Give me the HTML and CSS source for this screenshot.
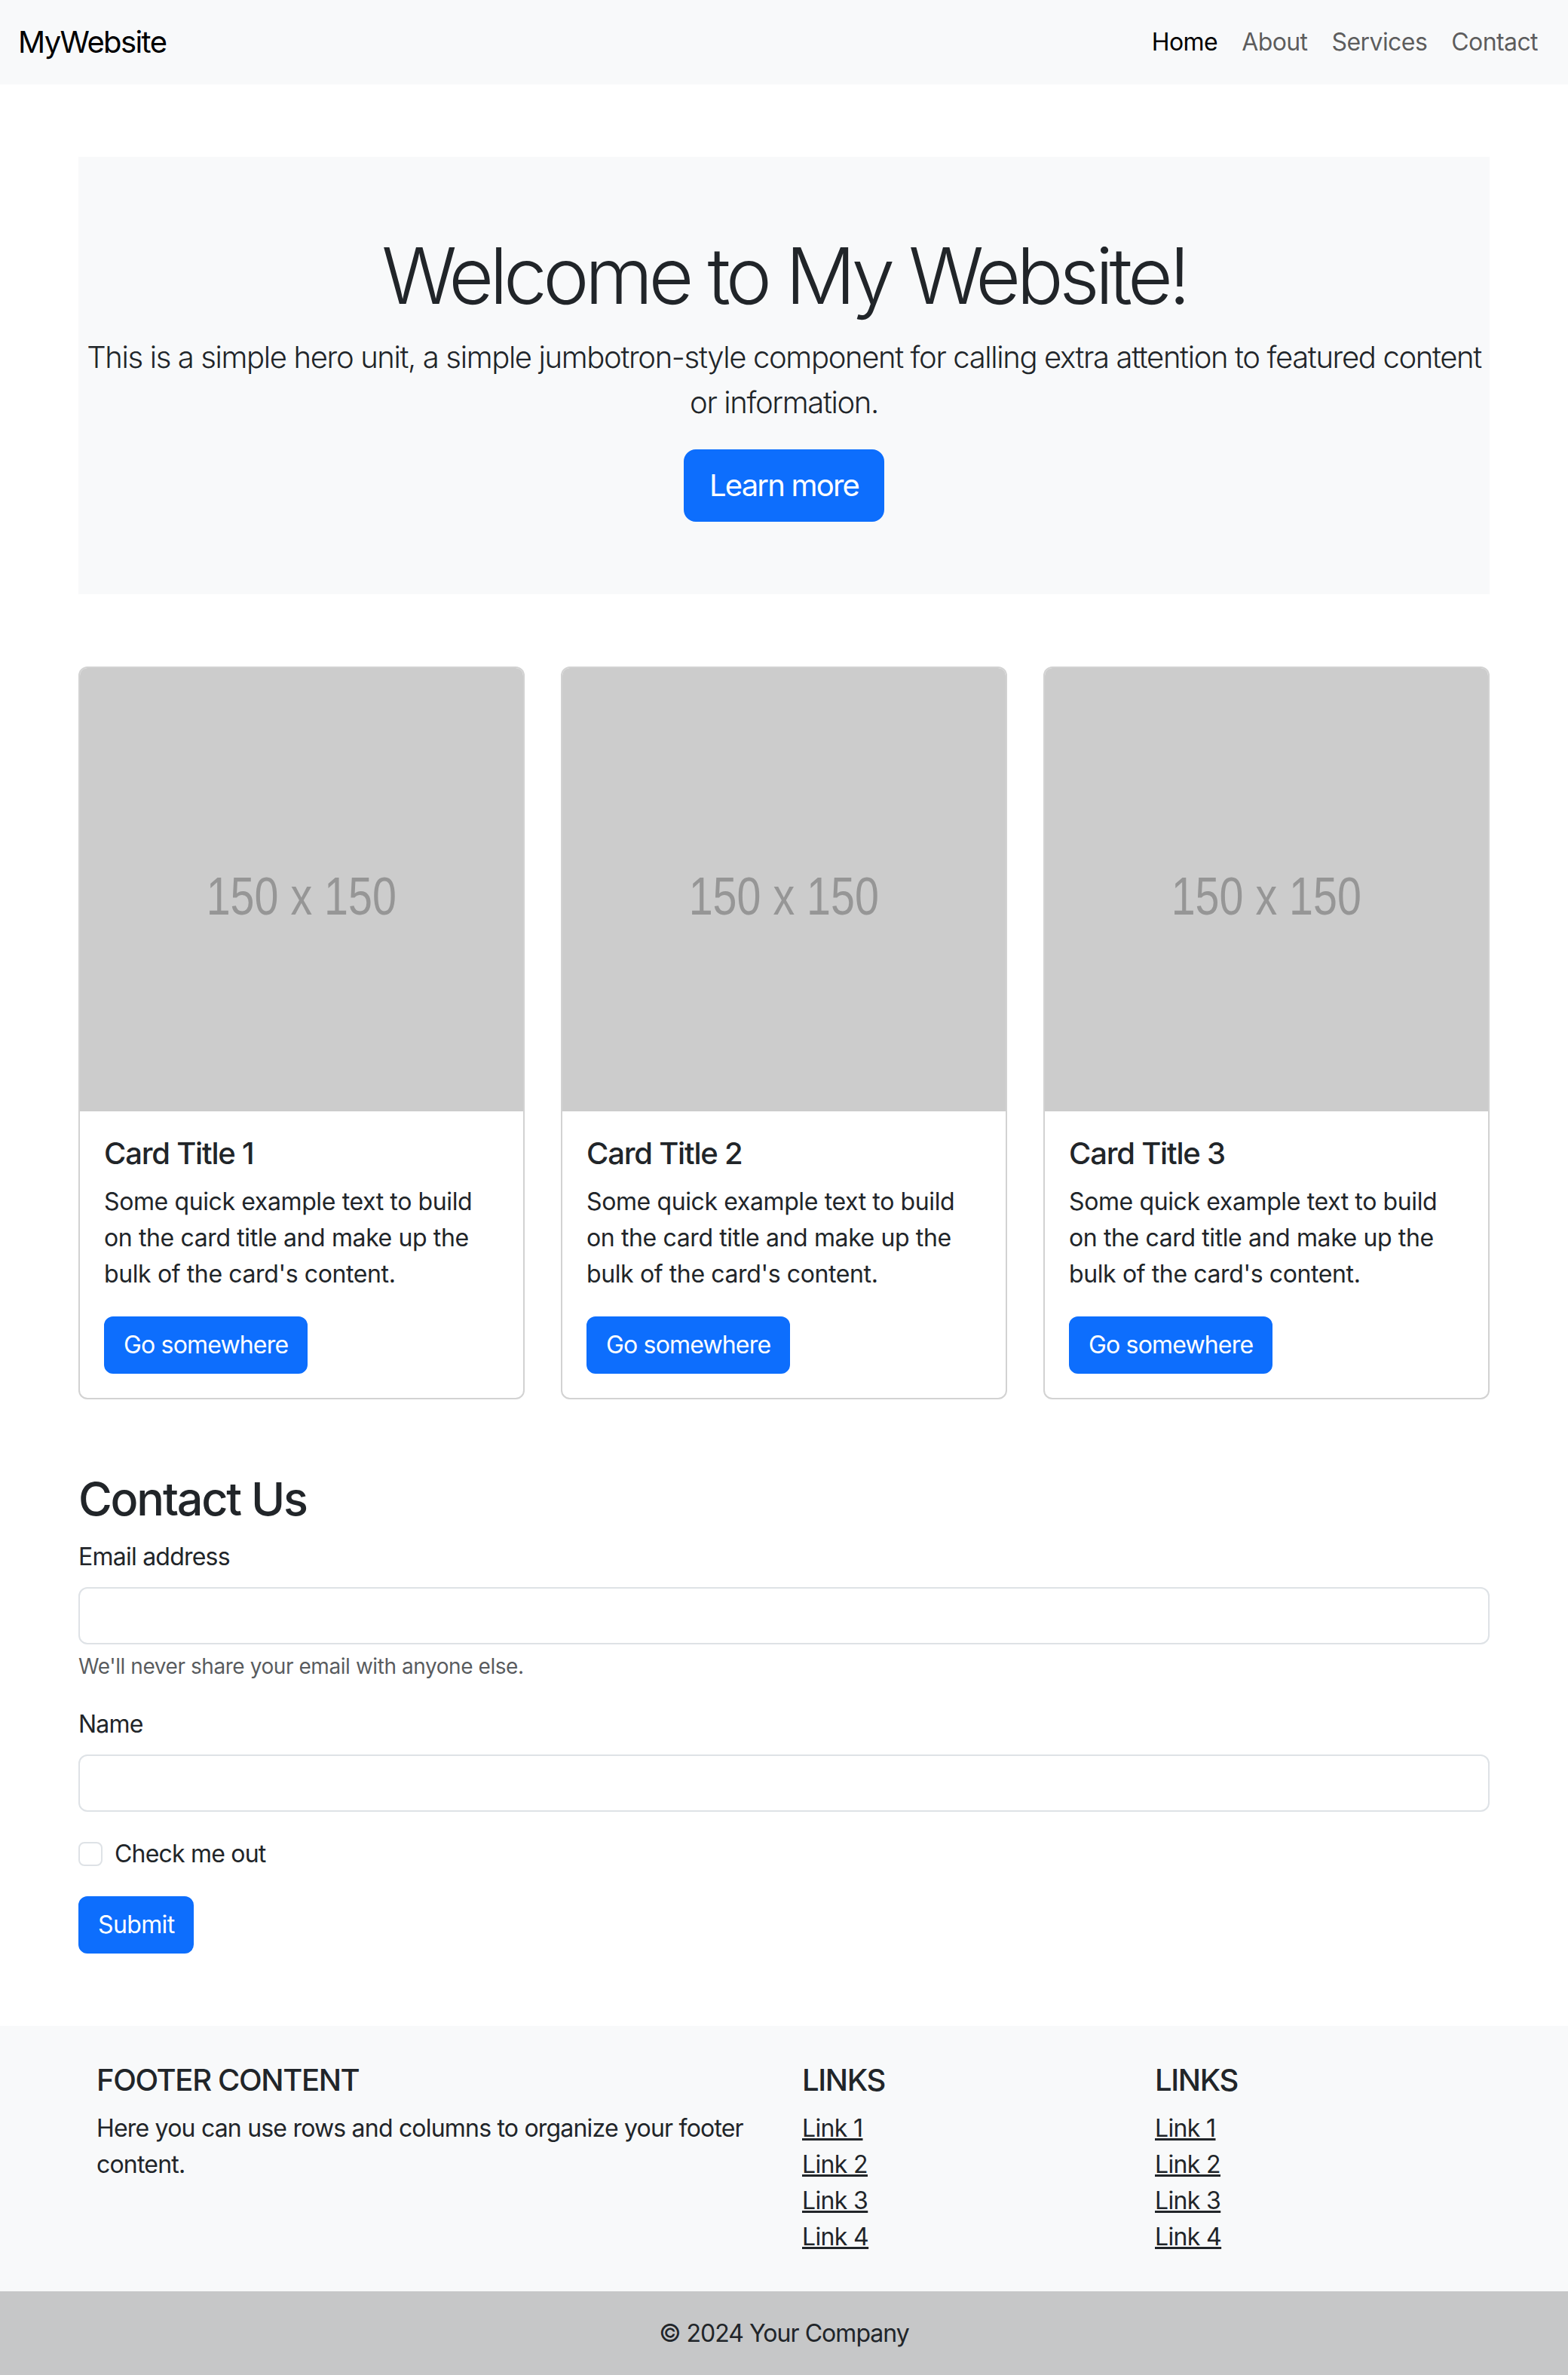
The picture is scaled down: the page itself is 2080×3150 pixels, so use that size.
FILE: index.html
```html
<!DOCTYPE html>
<html lang="en">
<head>
<meta charset="utf-8">
<title>MyWebsite</title>
<link rel="stylesheet" href="styles.css">
</head>
<body>
<nav class="navbar">
  <div class="navbar-inner">
    <a class="brand" href="#">MyWebsite</a>
    <ul class="nav">
      <li><a class="nav-link active" href="#">Home</a></li>
      <li><a class="nav-link" href="#">About</a></li>
      <li><a class="nav-link" href="#">Services</a></li>
      <li><a class="nav-link" href="#">Contact</a></li>
    </ul>
  </div>
</nav>

<main class="container">
  <section class="hero">
    <h1 class="display">Welcome to My Website!</h1>
    <p class="lead">This is a simple hero unit, a simple jumbotron-style component for calling extra attention to featured content or information.</p>
    <a class="btn btn-lg" href="#">Learn more</a>
  </section>

  <section class="cards">
    <div class="card">
      <div class="card-img"><span class="ph-text">150 x 150</span></div>
      <div class="card-body">
        <h5 class="card-title">Card Title 1</h5>
        <p class="card-text">Some quick example text to build on the card title and make up the bulk of the card's content.</p>
        <a class="btn" href="#">Go somewhere</a>
      </div>
    </div>
    <div class="card">
      <div class="card-img"><span class="ph-text">150 x 150</span></div>
      <div class="card-body">
        <h5 class="card-title">Card Title 2</h5>
        <p class="card-text">Some quick example text to build on the card title and make up the bulk of the card's content.</p>
        <a class="btn" href="#">Go somewhere</a>
      </div>
    </div>
    <div class="card">
      <div class="card-img"><span class="ph-text">150 x 150</span></div>
      <div class="card-body">
        <h5 class="card-title">Card Title 3</h5>
        <p class="card-text">Some quick example text to build on the card title and make up the bulk of the card's content.</p>
        <a class="btn" href="#">Go somewhere</a>
      </div>
    </div>
  </section>

  <section class="contact">
    <h2 class="contact-title">Contact Us</h2>
    <form class="form">
      <div class="field">
        <label class="form-label" for="email">Email address</label>
        <input class="form-control" type="email" id="email">
        <div class="form-text">We'll never share your email with anyone else.</div>
      </div>
      <div class="field">
        <label class="form-label" for="name">Name</label>
        <input class="form-control" type="text" id="name">
      </div>
      <div class="field form-check">
        <input class="check" type="checkbox" id="check">
        <label class="check-label" for="check">Check me out</label>
      </div>
      <button class="btn btn-submit" type="button">Submit</button>
    </form>
  </section>
</main>

<footer class="footer">
  <div class="footer-container">
    <div class="footer-row">
      <div class="fcol fcol-wide">
        <h5 class="footer-title">Footer Content</h5>
        <p class="footer-text">Here you can use rows and columns to organize your footer content.</p>
      </div>
      <div class="fcol">
        <h5 class="footer-title">Links</h5>
        <ul class="links">
          <li><a href="#">Link 1</a></li>
          <li><a href="#">Link 2</a></li>
          <li><a href="#">Link 3</a></li>
          <li><a href="#">Link 4</a></li>
        </ul>
      </div>
      <div class="fcol">
        <h5 class="footer-title">Links</h5>
        <ul class="links">
          <li><a href="#">Link 1</a></li>
          <li><a href="#">Link 2</a></li>
          <li><a href="#">Link 3</a></li>
          <li><a href="#">Link 4</a></li>
        </ul>
      </div>
    </div>
  </div>
  <div class="copyright">© 2024 Your Company</div>
</footer>
</body>
</html>
```

FILE: styles.css
```css
* { box-sizing: border-box; }

html { font-size: 32px; }

body {
  margin: 0;
  font-family: Inter, Roboto, "Liberation Sans", Arial, sans-serif;
  font-size: 1rem;
  line-height: 1.5;
  font-weight: 400;
  color: #212529;
  background: #fff;
}

h1, h2, h5, p, ul { margin: 0; }

/* Navbar */
.navbar {
  background: #f8f9fa;
  padding: 16px 0;
}
.navbar-inner {
  display: flex;
  align-items: center;
  justify-content: space-between;
  padding: 0 24px;
}
.brand {
  font-size: 40px;
  line-height: 60px;
  padding: 10px 0;
  color: #000;
  text-decoration: none;
  letter-spacing: -0.04em;
}
.nav {
  list-style: none;
  padding: 0;
  display: flex;
}
.nav-link {
  display: block;
  padding: 16px 16px;
  line-height: 48px;
  color: rgba(0, 0, 0, 0.65);
  text-decoration: none;
  letter-spacing: -0.018em;
}
.nav-link.active { color: #000; }

/* Container */
.container {
  max-width: 1920px;
  margin: 0 auto;
  padding: 0 24px;
}

/* Hero */
.hero {
  margin-top: 96px;
  padding: 96px 0;
  background: #f8f9fa;
  text-align: center;
}
.display {
  font-size: 103.36px;
  font-weight: 300;
  line-height: 1.2;
  margin-bottom: 16px;
  letter-spacing: -0.054em;
}
.lead {
  font-size: 40px;
  font-weight: 300;
  line-height: 1.5;
  margin-bottom: 32px;
  letter-spacing: -0.034em;
}

/* Buttons */
.btn {
  display: inline-block;
  font-family: inherit;
  font-size: 32px;
  line-height: 48px;
  padding: 12px 24px;
  border: 2px solid #0d6efd;
  border-radius: 12px;
  background: #0d6efd;
  color: #fff;
  text-decoration: none;
  cursor: pointer;
  letter-spacing: -0.026em;
}
.btn-submit { letter-spacing: -0.02em; }
.btn-lg {
  font-size: 40px;
  line-height: 60px;
  padding: 16px 32px;
  border-radius: 16px;
  letter-spacing: -0.045em;
}

/* Cards */
.cards {
  margin-top: 96px;
  display: grid;
  grid-template-columns: repeat(3, 1fr);
  gap: 48px;
}
.card {
  border: 2px solid rgba(0, 0, 0, 0.175);
  border-radius: 12px;
  overflow: hidden;
  background: #fff;
}
.card-img {
  aspect-ratio: 1 / 1;
  background: #cccccc;
  display: flex;
  align-items: center;
  justify-content: center;
  padding-top: 18px;
}
.ph-text {
  font-family: "Liberation Sans", Arial, sans-serif;
  font-size: 70px;
  line-height: 1;
  color: #969696;
  transform: scaleX(0.82);
  filter: blur(0.7px);
}
.card-body { padding: 32px; }
.card-title {
  font-size: 40px;
  font-weight: 500;
  line-height: 1.2;
  margin-bottom: 16px;
  letter-spacing: -0.03em;
}
.card-text { margin-bottom: 32px; letter-spacing: -0.012em; }

/* Contact */
.contact { margin-top: 96px; }
.contact-title {
  font-size: 61.12px;
  font-weight: 500;
  line-height: 1.2;
  margin-bottom: 16px;
  letter-spacing: -0.036em;
}
.field { margin-bottom: 32px; }
.form-label {
  display: inline-block;
  margin-bottom: 16px;
  letter-spacing: -0.024em;
}
.form-control {
  display: block;
  width: 100%;
  font-family: inherit;
  font-size: 32px;
  line-height: 48px;
  padding: 12px 24px;
  border: 2px solid #dee2e6;
  border-radius: 12px;
  background: #fff;
  color: #212529;
  outline: none;
}
.form-text {
  margin-top: 8px;
  font-size: 28px;
  line-height: 42px;
  color: rgba(33, 37, 41, 0.75);
  letter-spacing: -0.0155em;
}
.form-check {
  display: flex;
  align-items: flex-start;
  gap: 16px;
  min-height: 48px;
}
.check-label { letter-spacing: -0.025em; }
.check {
  appearance: none;
  -webkit-appearance: none;
  width: 32px;
  height: 32px;
  margin: 8px 0 0 0;
  border: 2px solid #dee2e6;
  border-radius: 8px;
  background: #fff;
  flex: none;
}

/* Footer */
.footer {
  margin-top: 96px;
  background: #f8f9fa;
}
.footer-container {
  max-width: 1920px;
  margin: 0 auto;
  padding: 48px;
}
.footer-row {
  display: flex;
  margin: 0 -24px;
}
.fcol {
  width: 25%;
  padding: 0 24px;
}
.fcol-wide { width: 50%; }
.footer-title {
  font-size: 40px;
  font-weight: 500;
  line-height: 1.2;
  margin-bottom: 16px;
  text-transform: uppercase;
  letter-spacing: -0.034em;
}
.footer-text { letter-spacing: -0.025em; }
.links {
  list-style: none;
  padding: 0;
}
.links a { color: #212529; letter-spacing: -0.02em; }
.copyright {
  text-align: center;
  padding: 32px;
  background: rgba(0, 0, 0, 0.2);
  letter-spacing: -0.03em;
}
```
